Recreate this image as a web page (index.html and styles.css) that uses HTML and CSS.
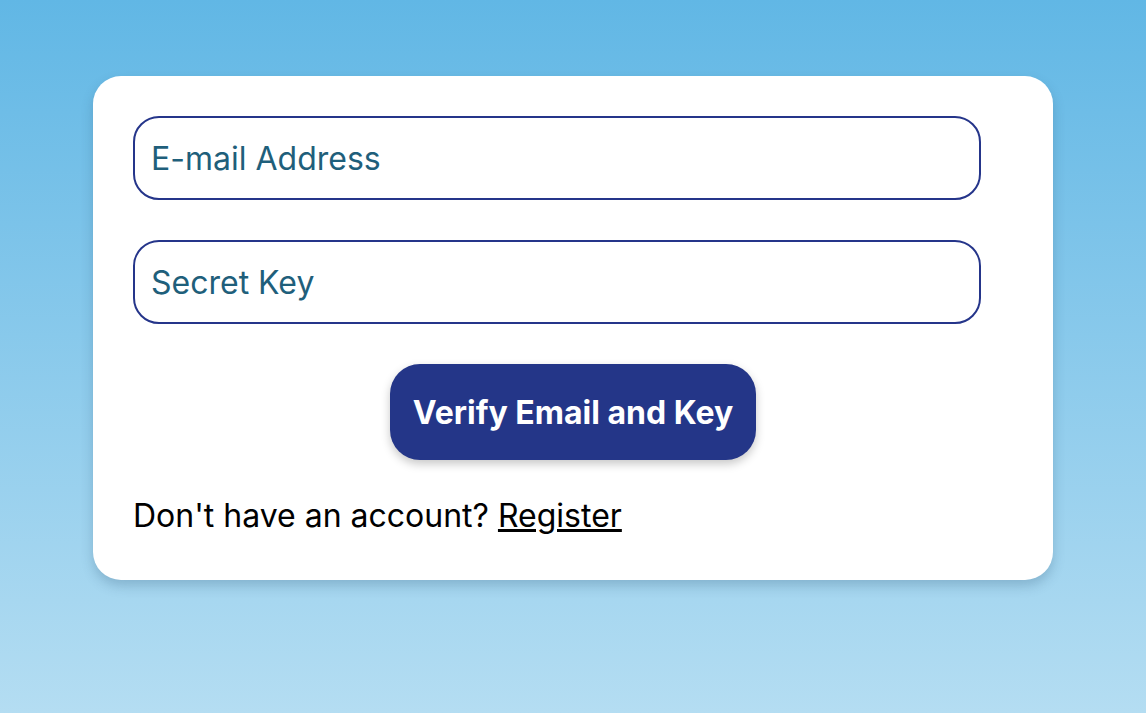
FILE: index.html
```html
<!DOCTYPE html>
<html lang="en">
<head>
<meta charset="utf-8">
<title>Verify</title>
<link rel="stylesheet" href="styles.css">
</head>
<body>
<main class="page">
  <form class="card">
    <input class="field" type="email" placeholder="E-mail Address">
    <input class="field" type="text" placeholder="Secret Key">
    <div class="actions">
      <button class="btn" type="button">Verify Email and Key</button>
    </div>
    <p class="note">Don't have an account? <a href="#" class="link">Register</a></p>
  </form>
</main>
</body>
</html>
```

FILE: styles.css
```css
* { box-sizing: border-box; }
html, body { margin: 0; height: 100%; }
body {
  font-family: Inter, "Noto Sans", sans-serif;
  background: linear-gradient(to bottom, #61b7e5 0%, #b4ddf2 100%);
}
.page {
  display: flex;
  justify-content: center;
  padding-top: 76px;
}
.card {
  width: 960px;
  background: #fff;
  border-radius: 28px;
  padding: 40px 40px 45px;
  display: flex;
  flex-direction: column;
  gap: 40px;
  box-shadow: 0 6px 12px rgba(40, 80, 110, 0.25);
}
.field {
  width: 848px;
  height: 84px;
  border: 2px solid #25358a;
  border-radius: 26px;
  padding: 0 16px;
  font-family: Inter, sans-serif;
  font-size: 32px;
  color: #1f5f7b;
  outline: none;
}
.field::placeholder { color: #1f5f7b; opacity: 1; }
.actions { display: flex; justify-content: center; }
.btn {
  width: 366px;
  height: 96px;
  border: none;
  border-radius: 30px;
  background: #243688;
  color: #fff;
  font-family: Inter, sans-serif;
  font-weight: 700;
  font-size: 32px;
  box-shadow: 0 4px 10px rgba(0, 0, 0, 0.22);
}
.note {
  margin: -3px 0 0;
  font-size: 32px;
  line-height: 38px;
  color: #000;
}
.link { color: #000; }
```
